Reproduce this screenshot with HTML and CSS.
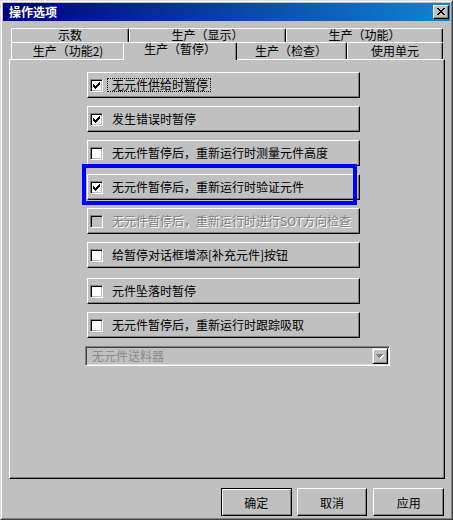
FILE: index.html
```html
<!DOCTYPE html>
<html>
<head>
<meta charset="utf-8">
<title>操作选项</title>
<link rel="stylesheet" href="styles.css">
</head>
<body>
<div class="window">
  <div class="frame">
    <div class="titlebar">
      <span class="title">操作选项</span>
      <span class="close">
        <svg width="8" height="7" viewBox="0 0 8 7" shape-rendering="crispEdges">
          <path d="M0 0h2v1h-2zM1 1h2v1h-2zM2 2h2v1h-2zM3 3h2v1h-2zM2 4h2v1h-2zM1 5h2v1h-2zM0 6h2v1h-2zM6 0h2v1h-2zM5 1h2v1h-2zM4 2h2v1h-2zM4 4h2v1h-2zM5 5h2v1h-2zM6 6h2v1h-2z" fill="#000"/>
        </svg>
      </span>
    </div>
    <div class="content">
      <div class="tabs">
        <div class="tabrow back">
          <div class="tab w118">示数</div>
          <div class="tab w157">生产（显示）</div>
          <div class="tab w157">生产（功能）</div>
        </div>
        <div class="tabrow front">
          <div class="tab t-f2">生产（功能2)</div>
          <div class="tab selected">生产（暂停）</div>
          <div class="tab t-chk">生产（检查）</div>
          <div class="tab t-unit">使用单元</div>
        </div>
      </div>
      <div class="panel">
        <div class="options">
          <div class="opt">
            <span class="cb"><svg class="mark" width="9" height="9" viewBox="0 0 9 9" shape-rendering="crispEdges"><path d="M7 1h1v3h-1zM6 2h1v3h-1zM5 3h1v3h-1zM4 4h1v3h-1zM3 5h1v3h-1zM2 4h1v3h-1zM1 3h1v3h-1z" fill="#000"/></svg></span>
            <span class="lbl focus">无元件供给时暂停</span>
          </div>
          <div class="opt">
            <span class="cb"><svg class="mark" width="9" height="9" viewBox="0 0 9 9" shape-rendering="crispEdges"><path d="M7 1h1v3h-1zM6 2h1v3h-1zM5 3h1v3h-1zM4 4h1v3h-1zM3 5h1v3h-1zM2 4h1v3h-1zM1 3h1v3h-1z" fill="#000"/></svg></span>
            <span class="lbl">发生错误时暂停</span>
          </div>
          <div class="opt">
            <span class="cb"></span>
            <span class="lbl">无元件暂停后，重新运行时测量元件高度</span>
          </div>
          <div class="opt">
            <span class="cb"><svg class="mark" width="9" height="9" viewBox="0 0 9 9" shape-rendering="crispEdges"><path d="M7 1h1v3h-1zM6 2h1v3h-1zM5 3h1v3h-1zM4 4h1v3h-1zM3 5h1v3h-1zM2 4h1v3h-1zM1 3h1v3h-1z" fill="#000"/></svg></span>
            <span class="lbl">无元件暂停后，重新运行时验证元件</span>
          </div>
          <div class="opt">
            <span class="cb disabled"></span>
            <span class="lbl dim">无元件暂停后，重新运行时进行SOT方向检查</span>
          </div>
          <div class="opt">
            <span class="cb"></span>
            <span class="lbl">给暂停对话框增添[补充元件]按钮</span>
          </div>
          <div class="opt extra">
            <span class="cb"></span>
            <span class="lbl">元件坠落时暂停</span>
          </div>
          <div class="opt">
            <span class="cb"></span>
            <span class="lbl">无元件暂停后，重新运行时跟踪吸取</span>
          </div>
        </div>
        <div class="combo">
          <span class="combo-text">无元件送料器</span>
          <span class="combo-btn">
            <svg width="8" height="5" viewBox="0 0 8 5" shape-rendering="crispEdges">
              <path d="M1 1h7v1h-7zM2 2h5v1h-5zM3 3h3v1h-3zM4 4h1v1h-1z" fill="#fff"/>
              <path d="M0 0h7v1h-7zM1 1h5v1h-5zM2 2h3v1h-3zM3 3h1v1h-1z" fill="#808080"/>
            </svg>
          </span>
        </div>
        <div class="highlight"></div>
      </div>
      <div class="buttons">
        <button class="btn default">确定</button>
        <button class="btn">取消</button>
        <button class="btn last">应用</button>
      </div>
    </div>
  </div>
</div>
</body>
</html>
```

FILE: styles.css
```css
html, body {
  margin: 0;
  padding: 0;
  background: #c0c0c0;
}

body {
  width: 453px;
  height: 520px;
  font-family: "Noto Sans CJK SC", "Noto Sans", sans-serif;
  font-size: 12px;
  color: #000;
}

.window {
  box-sizing: border-box;
  width: 453px;
  height: 520px;
  border: 1px solid;
  border-color: #dfdfdf #404040 #404040 #dfdfdf;
  background: #c0c0c0;
}

.frame {
  box-sizing: border-box;
  height: 100%;
  border: 1px solid;
  border-color: #fff #808080 #808080 #fff;
  padding: 1px;
}

.titlebar {
  height: 18px;
  background: linear-gradient(90deg, #000080, #1084d0);
  display: flex;
  align-items: center;
  justify-content: space-between;
  padding: 0 1px 0 6px;
}

.title {
  color: #fff;
  font-weight: bold;
  font-size: 12px;
  line-height: 14px;
}

.close {
  box-sizing: border-box;
  width: 16px;
  height: 14px;
  background: #c0c0c0;
  border: 1px solid;
  border-color: #fff #000 #000 #fff;
  box-shadow: inset -1px -1px 0 #808080;
  display: flex;
  align-items: center;
  justify-content: center;
  padding: 0 0 1px 0;
}

.close svg {
  display: block;
}

.content {
  padding: 7px 6px 0 6px;
}

.tabs {
  margin-left: 2px;
  width: 432px;
  height: 31px;
  display: flex;
  flex-direction: column;
}

.tabrow {
  display: flex;
  align-items: flex-start;
}

.tabrow.back {
  height: 14px;
}

.tabrow.front {
  height: 17px;
}

.tab {
  box-sizing: border-box;
  flex: none;
  border-left: 1px solid #fff;
  border-top: 1px solid #fff;
  border-right: 1px solid #000;
  border-top-left-radius: 2px;
  border-top-right-radius: 2px;
  box-shadow: inset -1px 0 0 #808080;
  background: #c0c0c0;
  text-align: center;
  white-space: nowrap;
}

.back .tab {
  height: 14px;
  line-height: 12px;
}

.front .tab {
  height: 17px;
  line-height: 16px;
}

.w118 { width: 118px; }
.w157 { width: 157px; }
.t-f2 { width: 114px; }
.t-chk { width: 112px; }
.t-unit { width: 96px; }

.front .tab.selected {
  width: 114px;
  height: 18px;
  margin: 0 -2px;
  line-height: 11px;
  z-index: 2;
  position: relative;
}

.panel {
  position: relative;
  box-sizing: border-box;
  width: 436px;
  height: 420px;
  border: 1px solid;
  border-color: #fff #000 #000 #fff;
  box-shadow: inset -1px -1px 0 #808080;
  padding: 12px 0 0 77px;
}

.options {
  display: flex;
  flex-direction: column;
}

.opt {
  box-sizing: border-box;
  width: 273px;
  height: 26px;
  margin-bottom: 8px;
  border: 1px solid;
  border-color: #fff #000 #000 #fff;
  box-shadow: inset -1px -1px 0 #808080;
  display: flex;
  align-items: center;
  padding-left: 2px;
}

.opt.extra {
  margin-top: 2px;
}

.cb {
  box-sizing: border-box;
  flex: none;
  width: 13px;
  height: 13px;
  border: 1px solid;
  border-color: #808080 #fff #fff #808080;
  box-shadow: inset 1px 1px 0 #000, inset -1px -1px 0 #c0c0c0;
  background: #fff;
  padding: 1px 0 0 1px;
}

.cb.disabled {
  background: #c0c0c0;
}

.mark {
  display: block;
  margin: 0;
}

.lbl {
  margin-left: 9px;
  line-height: 14px;
  white-space: nowrap;
}

.lbl.focus {
  margin-left: 4px;
  padding: 0 3px 0 5px;
  outline: 1px dotted #000;
  outline-offset: -1px;
}

.lbl.dim {
  color: #808080;
  text-shadow: 1px 1px 0 #fff;
}

.combo {
  box-sizing: border-box;
  width: 305px;
  height: 20px;
  margin-left: -2px;
  border: 1px solid;
  border-color: #808080 #fff #fff #808080;
  box-shadow: inset 1px 1px 0 #404040, inset -1px -1px 0 #dfdfdf;
  background: #c0c0c0;
  display: flex;
  align-items: center;
  justify-content: space-between;
  padding: 1px 1px 1px 6px;
}

.combo-text {
  color: #8a8a8a;
  line-height: 14px;
}

.combo-btn {
  box-sizing: border-box;
  width: 16px;
  height: 16px;
  border: 1px solid;
  border-color: #dfdfdf #000 #000 #dfdfdf;
  box-shadow: inset 1px 1px 0 #fff, inset -1px -1px 0 #808080;
  display: flex;
  align-items: center;
  justify-content: center;
}

.combo-btn svg {
  display: block;
}

.highlight {
  position: absolute;
  left: 72px;
  top: 104px;
  width: 275px;
  height: 41px;
  box-sizing: border-box;
  border: 4px solid #0000ff;
}

.buttons {
  display: flex;
  margin-top: 9px;
  padding-left: 212px;
  gap: 5px;
}

.btn {
  box-sizing: border-box;
  width: 72px;
  height: 28px;
  margin: 0;
  padding: 0;
  font-family: "Noto Sans CJK SC", "Noto Sans", sans-serif;
  font-size: 12px;
  color: #000;
  background: #c0c0c0;
  border: 1px solid;
  border-color: #fff #000 #000 #fff;
  box-shadow: inset -1px -1px 0 #808080;
}

.btn.default {
  border-color: #000;
  box-shadow: inset 1px 1px 0 #fff, inset -1px -1px 0 #808080;
}

.btn.last {
  margin-left: 1px;
}
```
